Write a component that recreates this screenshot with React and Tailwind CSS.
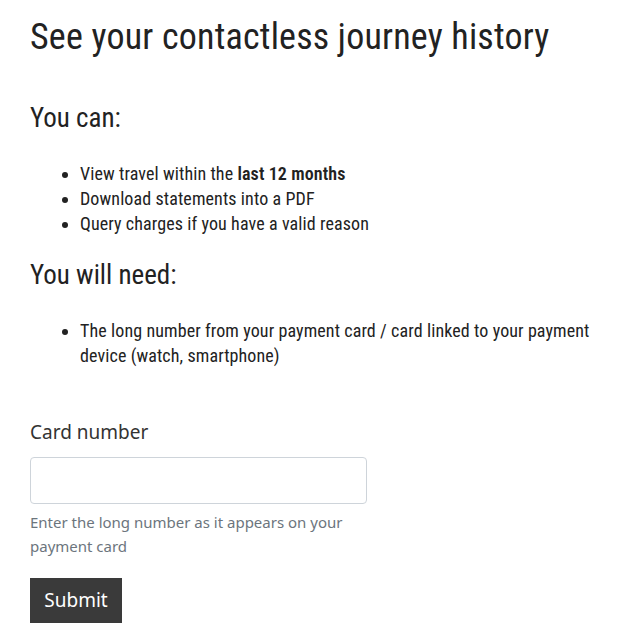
export default function App() {
  const main = { fontFamily: '"Roboto Condensed", "Open Sans", sans-serif' };
  const seg = { fontFamily: '"Noto Sans", "Open Sans", sans-serif' };
  return (
    <div className="min-h-[639px] bg-white px-[30px] pt-[13px] text-[#222]" style={main}>
      <h1 className="text-[36px] leading-[48px] tracking-[0.2px]">See your contactless journey history</h1>
      <h2 className="mt-[40px] text-[27px] leading-[34px]">You can:</h2>
      <ul className="mt-[26px] list-disc pl-[50px] text-[18px] leading-[25px] tracking-[0.1px]">
        <li>View travel within the <b className="font-semibold">last 12 months</b></li>
        <li>Download statements into a PDF</li>
        <li>Query charges if you have a valid reason</li>
      </ul>
      <h2 className="mt-[22px] text-[27px] leading-[34px]">You will need:</h2>
      <ul className="mt-[26px] list-disc pl-[50px] text-[18px] leading-[25px] tracking-[0.1px]">
        <li>The long number from your payment card / card linked to your payment device (watch, smartphone)</li>
      </ul>
      <form className="mt-[50px] w-[337px]" style={seg} onSubmit={(e) => e.preventDefault()}>
        <label className="block text-[19px] leading-[28px] text-[#333]">Card number</label>
        <input className="mt-[11px] block h-[47px] w-[337px] rounded-[4px] border border-[#ced4da] bg-white px-3" />
        <p className="mt-[6px] text-[15px] leading-[24px] text-[#6c757d]">Enter the long number as it appears on your payment card</p>
        <button className="mt-[20px] block h-[45px] w-[92px] bg-[#3a3a3a] text-[19px] leading-[45px] text-white">Submit</button>
      </form>
    </div>
  );
}
